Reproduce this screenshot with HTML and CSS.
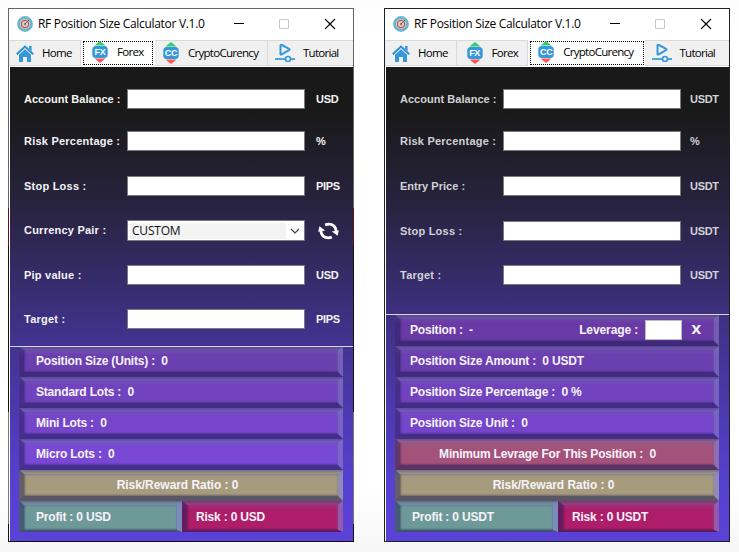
FILE: index.html
```html
<!DOCTYPE html>
<html lang="en">
<head>
<meta charset="utf-8">
<title>RF Position Size Calculator</title>
<link rel="stylesheet" href="styles.css">
</head>
<body>
<svg width="0" height="0" class="defs">
  <symbol id="logo" viewBox="0 0 16 16"><circle cx="8" cy="8" r="7.9" fill="#6eb6cb"/><circle cx="8" cy="8" r="5" fill="#d9cfcb"/><circle cx="8" cy="8" r="3.600" fill="none" stroke="#c4605c" stroke-width="1.300"/><circle cx="8" cy="8" r="1.200" fill="#b86d67"/><path d="M8 8l4-4" stroke="#59656f" stroke-width="1"/></symbol>
  <symbol id="home" viewBox="0 0 18 17"><path d="M.8 9.200L9 1.600l8.200 7.600" fill="none" stroke="#2b8fd0" stroke-width="2.100"/><path d="M13 1h2.600v5L13 3.800zM3 9.700l6-5.400 6 5.400V17h-4v-5H7v5H3z" fill="#3498db"/></symbol>
  <symbol id="pair" viewBox="0 0 16 22"><path d="M2.500 4.400L8 0l5.500 4.400z" fill="#2ecc71"/><path d="M2.500 17.600L8 22l5.500-4.400z" fill="#ff5252"/><rect x=".3" y="5" width="15.400" height="12" rx="3.500" fill="#3498db"/></symbol>
  <symbol id="video" viewBox="0 0 20 18"><path d="M5.500 1.500v8.200q0 1.300 1.200.6l7.300-4.100q1.200-.7 0-1.400L7 1Q5.500.4 5.500 1.500z" fill="none" stroke="#3498db" stroke-width="2"/><path d="M0 15h20" stroke="#3aa0d0" stroke-width="1.800"/><circle cx="13" cy="15" r="2.500" fill="#f0f0f0" stroke="#3498db" stroke-width="1.700"/></symbol>
</svg>
<main class="desktop">
  <section class="window win-forex">
    <header class="titlebar">
      <svg class="logo"><use href="#logo"/></svg><h1>RF Position Size Calculator V.1.0</h1>
      <svg class="controls" viewBox="0 0 102 12"><path d="M0 5.500h10" stroke="#000"/><path d="M45.500 1.500h9v9h-9z" fill="none" stroke="#ccc"/><path d="M91 1l10 10M101 1L91 11" stroke="#000" stroke-width="1.100"/></svg>
    </header>
    <nav class="tabs">
      <a class="tab t-home"><svg class="i-home"><use href="#home"/></svg><span>Home</span></a>
      <a class="tab t-forex active"><i class="pair"><svg><use href="#pair"/></svg><b>FX</b></i><span>Forex</span></a>
      <a class="tab t-crypto"><i class="pair"><svg><use href="#pair"/></svg><b>CC</b></i><span>CryptoCurency</span></a>
      <a class="tab t-tutorial"><svg class="i-video"><use href="#video"/></svg><span>Tutorial</span></a>
    </nav>
    <div class="body">
      <form class="form">
        <label class="tight">Account Balance :</label><input><em>USD</em>
        <label>Risk Percentage :</label><input><em>%</em>
        <label>Stop Loss :</label><input><em>PIPS</em>
        <label>Currency Pair :</label>
        <div class="combo"><span>CUSTOM</span><svg viewBox="0 0 10 6"><path d="M1 1l4 4 4-4" fill="none" stroke="#444" stroke-width="1.200"/></svg></div>
        <svg class="refresh" viewBox="0 0 22 18"><g fill="none" stroke="#fff" stroke-width="3"><path d="M7.500 2.500Q13 .7 16.600 3.600Q19.500 6.200 18.700 10.500"/><path d="M14.500 15.500Q9 17.300 5.400 14.400Q2.500 11.800 3.300 7.500"/></g><path d="M14.500 9.500L21.800 8.200 20.500 14zM7.500 8.500L.2 9.800 1.500 4z" fill="#fff"/></svg>
        <label>Pip value :</label><input><em>USD</em>
        <label>Target :</label><input><em>PIPS</em>
      </form>
      <div class="results">
        <p class="bar b2">Position Size (Units) :&nbsp; 0</p>
        <p class="bar b3">Standard Lots :&nbsp; 0</p>
        <p class="bar b4">Mini Lots :&nbsp; 0</p>
        <p class="bar b5">Micro Lots :&nbsp; 0</p>
        <p class="bar ratio">Risk/Reward Ratio : 0</p>
        <div class="split"><p class="bar profit">Profit : 0 USD</p><p class="bar risk">Risk : 0 USD</p></div>
      </div>
    </div>
  </section>
  <section class="window win-crypto">
    <header class="titlebar">
      <svg class="logo"><use href="#logo"/></svg><h1>RF Position Size Calculator V.1.0</h1>
      <svg class="controls" viewBox="0 0 102 12"><path d="M0 5.500h10" stroke="#000"/><path d="M45.500 1.500h9v9h-9z" fill="none" stroke="#ccc"/><path d="M91 1l10 10M101 1L91 11" stroke="#000" stroke-width="1.100"/></svg>
    </header>
    <nav class="tabs">
      <a class="tab t-home"><svg class="i-home"><use href="#home"/></svg><span>Home</span></a>
      <a class="tab t-forex"><i class="pair"><svg><use href="#pair"/></svg><b>FX</b></i><span>Forex</span></a>
      <a class="tab t-crypto active"><i class="pair"><svg><use href="#pair"/></svg><b>CC</b></i><span>CryptoCurency</span></a>
      <a class="tab t-tutorial"><svg class="i-video"><use href="#video"/></svg><span>Tutorial</span></a>
    </nav>
    <div class="body">
      <form class="form">
        <label class="tight">Account Balance :</label><input><em>USDT</em>
        <label>Risk Percentage :</label><input><em>%</em>
        <label class="tight">Entry Price :</label><input><em>USDT</em>
        <label>Stop Loss :</label><input><em>USDT</em>
        <label>Target :</label><input><em>USDT</em>
      </form>
      <div class="results">
        <div class="bar b1"><span>Position :&nbsp; -</span><span class="leverage">Leverage :</span><input><strong>X</strong></div>
        <p class="bar b2">Position Size Amount :&nbsp; 0 USDT</p>
        <p class="bar b3">Position Size Percentage :&nbsp; 0 %</p>
        <p class="bar b4">Position Size Unit :&nbsp; 0</p>
        <p class="bar minimum">Minimum Levrage For This Position :&nbsp; 0</p>
        <p class="bar ratio">Risk/Reward Ratio : 0</p>
        <div class="split"><p class="bar profit">Profit : 0 USDT</p><p class="bar risk">Risk : 0 USDT</p></div>
      </div>
    </div>
  </section>
</main>
</body>
</html>
```

FILE: styles.css
```css
* { box-sizing: border-box; }
body { margin: 0; font-family: "Liberation Sans", sans-serif; background: linear-gradient(#fdfdfd, #fff 8%, #fff 88%, #f6f6f6); }
.defs { display: block; }
.desktop { display: flex; gap: 30px; height: 552px; padding: 8px; overflow: hidden; }
.window { width: 346px; height: 534px; padding: 1px; flex: none; display: flex; flex-direction: column; }
.win-forex { background: linear-gradient(#666 0 200px, #611 200px 238px, #111 238px 404px, #777 404px 516px, #111 516px); }
.win-crypto { background: #18242a; }

.titlebar { height: 31px; background: #fff; display: flex; align-items: center; padding: 0 17px 2px 8px; }
.logo { width: 16px; height: 16px; }
h1 { margin: 0 0 0 5px; font: 12px/18px "Open Sans", sans-serif; letter-spacing: -.31px; color: #000; white-space: nowrap; }
.controls { width: 102px; height: 12px; margin-left: auto; }

.tabs { height: 27px; display: flex; background: #fff; padding-bottom: 1px; }
.tab { height: 26px; display: flex; align-items: center; background: #f0f0f0; border: 1px solid #d9d9d9; border-width: 1px 1px 1px 0; font: 11.5px/16px "Open Sans", sans-serif; letter-spacing: -.72px; color: #000; white-space: nowrap; }
.t-home { width: 72px; padding-left: 7px; }
.t-forex { width: 72px; padding-left: 10px; }
.t-crypto { width: 115px; padding-left: 9px; }
.t-tutorial { width: 85px; padding-left: 7px; border-right: 0; }
.active { height: 24px; margin: 1px 1px 0 2px; padding-bottom: 2px; border: 1px dotted #000; background: #fff; }
.t-forex.active { width: 70px; padding-left: 8px; margin-right: 2px; }
.t-crypto.active { width: 114px; padding-left: 7px; }
.t-forex.active + .t-crypto { width: 113px; padding-left: 8px; }
.i-home { width: 18px; height: 17px; margin-right: 8px; }
.i-video { width: 20px; height: 18px; margin-right: 8px; }
.pair { width: 16px; height: 22px; margin-right: 9px; display: grid; place-items: center; }
.pair svg, .pair b { grid-area: 1 / 1; }
.pair svg { width: 16px; height: 22px; }
.pair b { z-index: 1; font: bold 9px/10px "Liberation Sans", sans-serif; letter-spacing: -.3px; color: #fff; }

.body { flex: 1; border-left: 1px solid #fff; background: linear-gradient(#191919 0, #191919 9%, #28233f 29%, #42338f 58%, #5640cf 87%, #5a42d8); }
.form { height: 280px; padding: 22px 0 0 14px; display: grid; grid-template: 42px 45px 44px 45px 44px 20px / 103px 178px 1fr; align-items: start; border-bottom: 1px solid #d8d8e0; }
.win-crypto .form { height: 248px; grid-template-rows: 42px 45px 45px 44px 20px; }
.form label, .form em { font: bold 11px/20px "Liberation Sans", sans-serif; letter-spacing: .23px; color: #f4f4f4; white-space: nowrap; }
.form .tight { letter-spacing: .03px; }
.form em { padding-left: 11px; letter-spacing: -.3px; }
.win-crypto .form em { padding-left: 9px; }
.win-crypto .form label, .win-crypto .form em { color: #d2d2d4; }
input { width: 178px; height: 20px; margin: 0; padding: 0 3px; border: 1px solid #7a7a7a; border-radius: 0; background: #fff; }
.combo { height: 21px; border: 1px solid #7a7a7a; background: #fff; padding: 2px; display: flex; align-items: center; justify-content: space-between; }
.combo span { width: 156px; height: 16px; padding-left: 2px; background: #f3f3f3; font: 12px/15px "Open Sans", sans-serif; letter-spacing: -.2px; color: #111; }
.combo svg { width: 10px; height: 6px; margin-right: 2px; }
.refresh { width: 21px; height: 18px; margin: 2px 0 0 13px; }

.results { width: 324px; margin-left: 9px; }
.bar { height: 31px; margin: 0; padding: 0 0 0 12px; border: solid; border-width: 4px 5px 5px; border-color: transparent rgba(125,140,190,.42) rgba(25,25,80,.52) rgba(25,25,80,.48); background-image: linear-gradient(rgba(75,80,130,.6), rgba(120,120,170,.32) 3px, transparent 8px); background-origin: border-box; background-repeat: no-repeat; box-shadow: inset 0 -1px 2px rgba(30,20,80,.28), inset 1px 0 2px rgba(30,20,80,.3), inset -1px 0 2px rgba(130,140,200,.3); color: #f6f3fa; font: bold 12px/22px "Liberation Sans", sans-serif; letter-spacing: -.19px; white-space: nowrap; }
.win-forex .results > .bar:first-child { height: 30px; border-top-width: 3px; }
.win-crypto .bar { padding-left: 10px; }
.b1 { display: flex; align-items: center; background-color: #693aa6; }
.b2 { background-color: #6c3fb1; }
.b3 { background-color: #7143bf; }
.b4 { background-color: #7545ca; }
.b5 { background-color: #7948d5; }
.win-forex .b5 { line-height: 23px; }
.leverage { margin-left: auto; letter-spacing: -.1px; }
.bar input { width: 37px; margin-left: 7px; border-color: #bbb; }
.bar strong { margin: 0 13px 0 9px; font: bold 13px/20px "DejaVu Sans", sans-serif; }
.results .minimum { background-color: #a5527b; text-align: center; padding: 0 19px 0 0; }
.results .ratio { background-color: #a69b7c; text-align: center; padding: 0 7px 0 0; letter-spacing: -.05px; }
.split { display: grid; grid-template-columns: 163px 161px; }
.results .split .bar { border-bottom-width: 2px; line-height: 24px; }
.results .profit { background-color: #6e9999; padding-left: 12px; }
.results .risk { background-color: #ad1d69; padding-left: 9px; }
.results .profit, .results .risk, .results .ratio, .results .minimum { border-right-color: rgba(130,130,215,.6); }
```
